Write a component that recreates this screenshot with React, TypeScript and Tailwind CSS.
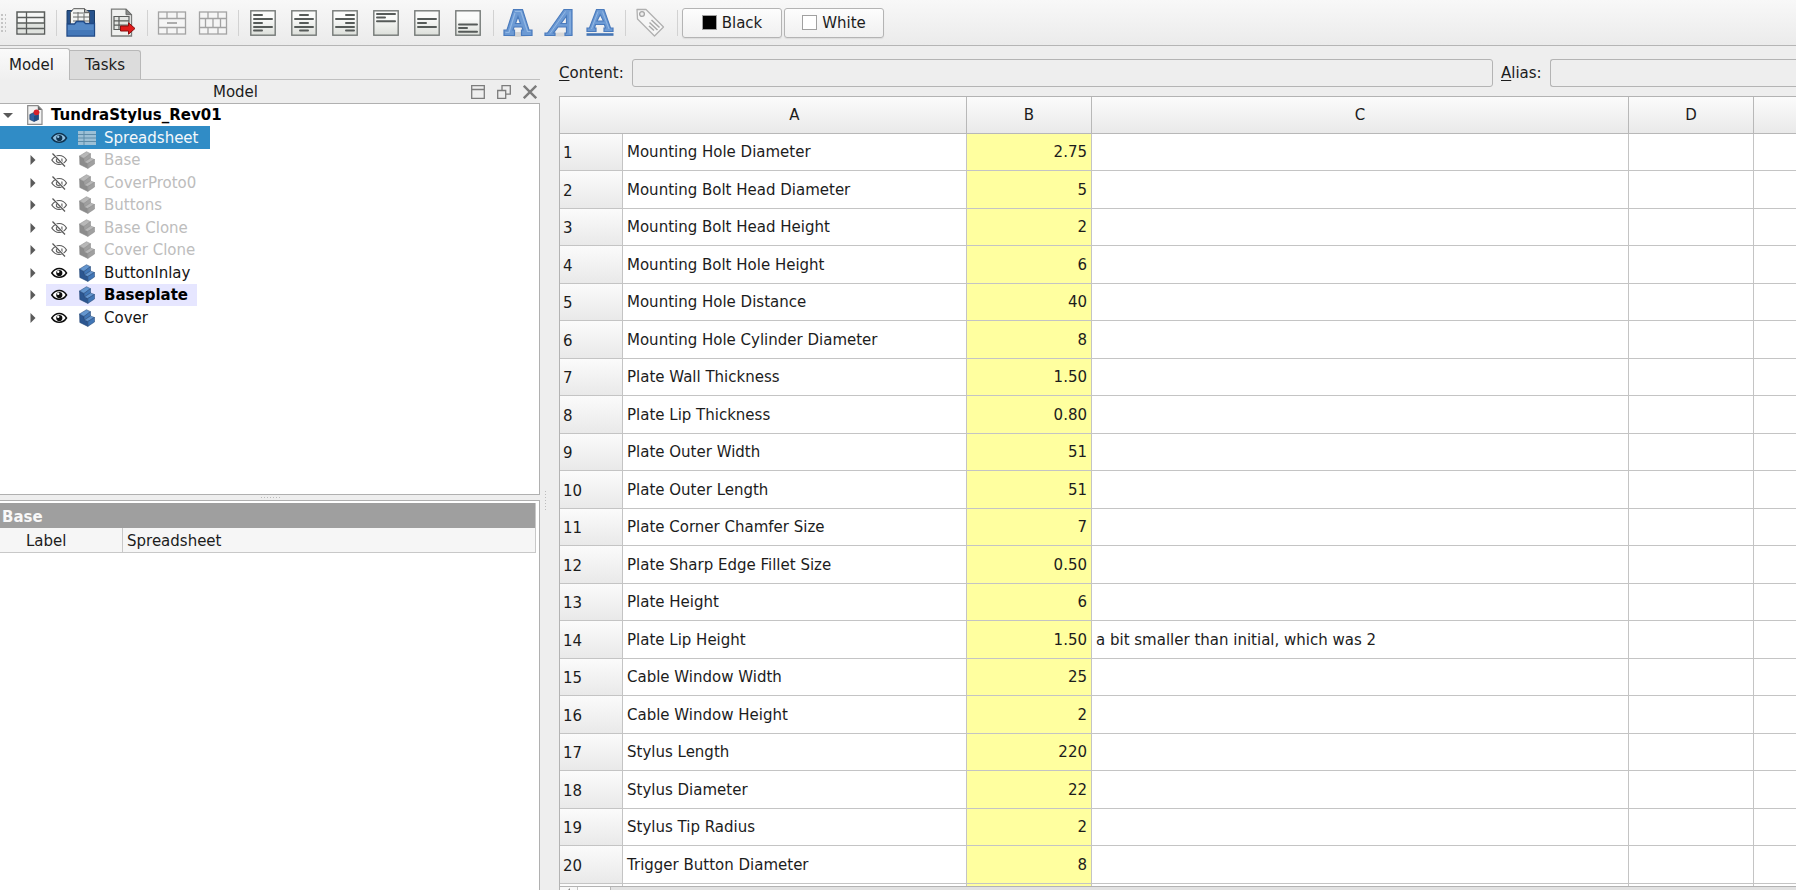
import type { ReactNode } from "react";

type Vis = "dim" | "normal" | "active";

const TREE: { name: string; kind: Vis }[] = [
  { name: "Base", kind: "dim" },
  { name: "CoverProto0", kind: "dim" },
  { name: "Buttons", kind: "dim" },
  { name: "Base Clone", kind: "dim" },
  { name: "Cover Clone", kind: "dim" },
  { name: "ButtonInlay", kind: "normal" },
  { name: "Baseplate", kind: "active" },
  { name: "Cover", kind: "normal" },
];

const ROWS: [string, string, string?][] = [
  ["Mounting Hole Diameter", "2.75"],
  ["Mounting Bolt Head Diameter", "5"],
  ["Mounting Bolt Head Height", "2"],
  ["Mounting Bolt Hole Height", "6"],
  ["Mounting Hole Distance", "40"],
  ["Mounting Hole Cylinder Diameter", "8"],
  ["Plate Wall Thickness", "1.50"],
  ["Plate Lip Thickness", "0.80"],
  ["Plate Outer Width", "51"],
  ["Plate Outer Length", "51"],
  ["Plate Corner Chamfer Size", "7"],
  ["Plate Sharp Edge Fillet Size", "0.50"],
  ["Plate Height", "6"],
  ["Plate Lip Height", "1.50", "a bit smaller than initial, which was 2"],
  ["Cable Window Width", "25"],
  ["Cable Window Height", "2"],
  ["Stylus Length", "220"],
  ["Stylus Diameter", "22"],
  ["Stylus Tip Radius", "2"],
  ["Trigger Button Diameter", "8"],
];

/* ---------- toolbar icons ---------- */

function SheetIcon() {
  return (
    <svg width="30" height="30" viewBox="0 0 30 30" aria-hidden="true">
      <rect x="1" y="4" width="27.5" height="22" fill="#f6f7f6" stroke="#5a5d5b" strokeWidth="1.5" />
      <rect x="1.8" y="15" width="26" height="10.2" fill="#dfe2de" />
      <path d="M1 9.5h27.5M1 15h27.500M1 20.5h27.500M10.500 4v22" stroke="#5a5d5b" strokeWidth="1.3" fill="none" />
    </svg>
  );
}

function ImportIcon() {
  return (
    <svg width="30" height="30" viewBox="0 0 30 30" aria-hidden="true">
      <path d="M1 2.500h27.500v13H1z" fill="#27528c" stroke="#1b3c66" />
      <path d="M7.500 0.700h11l5 4v12h-19V4.500z" fill="#f4f5f3" stroke="#555" />
      <path d="M18.500 0.700v4h5" fill="#b0b2b0" stroke="#555" />
      <path d="M7 5h12M7 9h16M7 13h16M12 4v11M18 6v9" fill="none" stroke="#6a6c6a" />
      <path d="M1 16h7.500l2-2.500h7l2 2h9v12.500H1z" fill="#5488c6" stroke="#204a87" strokeWidth="1.300" />
      <path d="M2 22h26v5.300H2z" fill="#4377b8" />
    </svg>
  );
}

function ExportIcon() {
  return (
    <svg width="30" height="30" viewBox="0 0 30 30" aria-hidden="true">
      <path d="M4.500 1.200h14.500l5.500 5.500v21.300h-20z" fill="#f0f1ef" stroke="#7a7c7a" strokeWidth="1.300" />
      <path d="M19 1.200v5.500h5.500z" fill="#8a8c8a" stroke="#6a6c6a" />
      <path d="M7 8.500h15v13H7z" fill="#e4e6e3" stroke="#5a5d5b" strokeWidth="1.200" />
      <path d="M7 12.800h15M7 17.100h15M12 8.500v13" stroke="#5a5d5b" strokeWidth="1.200" fill="none" />
      <path d="M13.500 18h8v-3.200l6.500 5.700-6.500 5.700V23h-8z" fill="#e01b1b" stroke="#8c0e0e" />
    </svg>
  );
}

function MergeIcon({ split = false }: { split?: boolean }) {
  return (
    <svg width="30" height="30" viewBox="0 0 30 30" aria-hidden="true">
      <rect x="1.500" y="4" width="27" height="22" fill="#f5f5f5" stroke="#a3a3a3" strokeWidth="1.300" />
      <path d="M1.500 10.500h27M1.500 19.500h27M10 4v6.500M20 4v6.500M10 19.500V26M20 19.500V26" stroke="#a3a3a3" strokeWidth="1.300" fill="none" />
      {split ? (
        <path d="M7.500 10.500v9M15 10.500v9M22.500 10.500v9" stroke="#a3a3a3" strokeWidth="1.300" />
      ) : (
        <path d="M10 15h10" stroke="#adadad" strokeWidth="2" />
      )}
    </svg>
  );
}

function AlignIcon({ lines }: { lines: [number, number, number][] }) {
  return (
    <svg width="30" height="30" viewBox="0 0 30 30" aria-hidden="true">
      <defs>
        <linearGradient id="alignFill" x1="0" y1="0" x2="0" y2="1">
          <stop offset="0.3" stopColor="#fafbfa" />
          <stop offset="1" stopColor="#dcdfda" />
        </linearGradient>
      </defs>
      <rect x="2.800" y="2.800" width="24.400" height="24.400" fill="url(#alignFill)" stroke="#747977" strokeWidth="1.400" />
      {lines.map(([x, y, w]) => (
        <path key={y} d={`M${x} ${y}h${w}`} stroke="#565b59" strokeWidth="2" strokeLinecap="round" />
      ))}
    </svg>
  );
}

const LEFT: [number, number, number][] = [[6, 7, 8], [6, 11, 18], [6, 15, 8], [6, 19, 18], [6, 22.5, 8]];
const CENTER: [number, number, number][] = [[11, 7, 8], [6, 11, 18], [11, 15, 8], [6, 19, 18], [11, 22.5, 8]];
const RIGHT: [number, number, number][] = [[16, 7, 8], [6, 11, 18], [16, 15, 8], [6, 19, 18], [16, 22.5, 8]];
const TOP: [number, number, number][] = [[6, 6, 18], [6, 9.5, 8], [6, 13.3, 18]];
const MIDDLE: [number, number, number][] = [[6, 11, 18], [6, 15, 8], [6, 19, 18]];
const BOTTOM: [number, number, number][] = [[6, 16.5, 18], [6, 20, 8], [6, 23.8, 18]];

function BoldIcon() {
  return (
    <svg width="30" height="30" viewBox="0 0 30 30" aria-hidden="true">
      <ellipse cx="15" cy="26.500" rx="13" ry="2.500" fill="#d4d4d4" />
      <path
        d="M10.500 1.500h9l6.500 20.500h3v5.500H18.500V22h1.500l-1-3h-8l-1 3h1.500v5.500H1V22h3zM15 8.500l-2.500 7h5z"
        fill="#6c9ad4" stroke="#4a7bbd" strokeWidth="1.200" fillRule="evenodd"
      />
      <path d="M12 3.500h6l6.500 20h3M2.500 24.500h3.500L12 5" fill="none" stroke="#93b8e4" strokeWidth="1.200" />
    </svg>
  );
}

function ItalicIcon() {
  return (
    <svg width="30" height="30" viewBox="0 0 30 30" aria-hidden="true">
      <ellipse cx="17" cy="26.500" rx="12" ry="2" fill="#d8d8d8" />
      <path
        d="M20 1.500h8v26h-7V25h1.500v-6h-8.500L9.500 25H11v2.500H1V25h2.500zM22.500 8L17 15.500h5.500z"
        fill="#6c9ad4" stroke="#4a7bbd" strokeWidth="1.200" fillRule="evenodd"
      />
      <path d="M21.500 3.500L6 25.500M26 3.500v22" fill="none" stroke="#93b8e4" />
    </svg>
  );
}

function UnderlineIcon() {
  return (
    <svg width="30" height="30" viewBox="0 0 30 30" aria-hidden="true">
      <path
        d="M11.500 1.500h7.500l6.500 18.500H28v3.500h-9V20h1.500l-1-3.500h-9L9.500 20H11v3.500H2V20h2.500zM15.200 6.500L12 13h6.500z"
        fill="#6c9ad4" stroke="#4a7bbd" strokeWidth="1.200" fillRule="evenodd"
      />
      <path d="M13 3.500L6.500 21M17.500 3.500L24 21" fill="none" stroke="#93b8e4" />
      <path d="M1.500 26.500h27" stroke="#4374b4" strokeWidth="2.600" />
    </svg>
  );
}

function TagIcon() {
  return (
    <svg width="30" height="30" viewBox="0 0 30 30" aria-hidden="true">
      <path d="M2 1.500h9L28.500 19 19.500 28 2.500 11z" fill="#f6f6f6" stroke="#b0b0b0" strokeWidth="1.300" strokeLinejoin="round" />
      <circle cx="7" cy="6" r="2.400" fill="#eee" stroke="#a6a6a6" strokeWidth="1.300" />
      <path d="M16.500 12l8 7.500M14.500 14.500l8 7.500M14 18l5 4.500" stroke="#a9a9a9" strokeWidth="1.500" />
    </svg>
  );
}

/* ---------- tree icons ---------- */

function EyeOpen({ color = "#0c0c0c", pupil = "#fff" }: { color?: string; pupil?: string }) {
  return (
    <svg width="18" height="12" viewBox="0 0 18 12" aria-hidden="true">
      <path d="M1.800 6C4 2.600 6.500 1.500 9.200 1.500S14.500 2.600 16.500 6C14.500 9.200 11.900 10.300 9.200 10.300S4 9.200 1.800 6z" fill={pupil} stroke={color} strokeWidth="1.500" />
      <circle cx="9.300" cy="6" r="3.100" fill={color} />
      <circle cx="8.200" cy="4.800" r="1.200" fill={pupil} />
    </svg>
  );
}

function EyeClosed() {
  return (
    <svg width="18" height="16" viewBox="0 0 18 16" aria-hidden="true">
      <path d="M1.800 8C4 4.600 6.500 3.500 9.200 3.500S14.500 4.600 16.500 8C14.500 11.400 11.900 12.500 9.200 12.500S4 11.400 1.800 8z" fill="none" stroke="#5a5a5a" strokeWidth="1.200" />
      <path d="M6.500 6.500v3q2.700 2.500 5.400 0V6.500" fill="none" stroke="#666" strokeWidth="1.200" />
      <path d="M3.500 2l11.500 12.500" stroke="#fff" strokeWidth="2.200" />
      <path d="M2.500 1.500l12.500 13" stroke="#555" strokeWidth="1.200" />
    </svg>
  );
}

function BodyIcon({ dim }: { dim: boolean }) {
  const c = dim
    ? { top: "#b8b8b8", left: "#8c8c8c", right: "#a0a0a0", line: "#868686" }
    : { top: "#6496cf", left: "#2c5690", right: "#4176b6", line: "#1f4170" };
  return (
    <svg width="16" height="18" viewBox="0 0 16 18" aria-hidden="true">
      <g stroke={c.line} strokeWidth="0.500" strokeLinejoin="round">
        <path d="M0.500 5L5 7.500l0.500 3.500 3.300 1.500v4.900L0.800 13.500z" fill={c.left} />
        <path d="M0.500 5L7.500 0.700l4 2L5 7.500z" fill={c.top} />
        <path d="M5 7.500l6.500-4.800V7L5.500 11z" fill={c.right} />
        <path d="M5.500 11l6-4 4 1.500-6.700 4z" fill={c.top} />
        <path d="M8.800 12.500l6.700-4v4.500l-6.700 4.400z" fill={c.right} />
      </g>
    </svg>
  );
}

function DocIcon() {
  return (
    <svg width="16" height="20" viewBox="0 0 16 20" aria-hidden="true">
      <path d="M0.700 0.700h10.300l4 4v14.600H0.700z" fill="#f2f2f2" stroke="#8b8b8b" strokeWidth="1.200" />
      <path d="M10.800 0.700v4.300H15z" fill="#666" />
      <path d="M2.800 9.500L7 7.500l4.500 2v5L7 16.500l-4.200-2z" fill="#2f5f9f" stroke="#173459" strokeWidth="0.600" />
      <path d="M7 11l4.500-1.500v5L7 16.500z" fill="#214a80" />
      <circle cx="9.500" cy="7.300" r="2.900" fill="#d5202a" />
    </svg>
  );
}

function TreeSheetIcon() {
  return (
    <svg width="18" height="14" viewBox="0 0 18 14" aria-hidden="true">
      <rect width="18" height="14" fill="#9cc0d6" />
      <path d="M0 3.500h18M0 7h18M0 10.500h18M6 0v14" stroke="#5f8ca8" strokeWidth="1" />
    </svg>
  );
}

/* ---------- pieces ---------- */

function ToolButton({ label, children }: { label: string; children: ReactNode }) {
  return (
    <button type="button" aria-label={label} className="flex size-[30px] shrink-0 items-center justify-center">
      {children}
    </button>
  );
}

function Separator() {
  return <div className="mr-[9px] ml-[10px] h-[26px] w-px shrink-0 bg-[#d2d2d2]" />;
}

function ColorButton({ swatch, children }: { swatch: string; children: ReactNode }) {
  return (
    <button
      type="button"
      className="flex h-[30px] w-[100px] items-center justify-center gap-[5px] rounded-[3px] border border-[#b4b4b4] bg-gradient-to-b from-[#fdfdfd] to-[#f0f0f0] shadow-[0_1px_1px_#dcdcdc]"
    >
      <span className={`size-[15px] border border-[#a0a0a0] ${swatch}`} />
      {children}
    </button>
  );
}

function ToolGroup({ children }: { children: ReactNode }) {
  return <div className="flex gap-[11px]">{children}</div>;
}

function Toolbar() {
  return (
    <div
      role="toolbar"
      className="flex h-[46px] shrink-0 items-center border-b border-[#b5b5b5] bg-gradient-to-b from-[#f8f8f8] to-[#ebebeb]"
    >
      <div className="mr-[10px] h-5 w-[6px] bg-[radial-gradient(#c4c4c4_1px,transparent_1px)] bg-size-[4px_4px]" />
      <ToolButton label="Create spreadsheet"><SheetIcon /></ToolButton>
      <Separator />
      <ToolGroup>
        <ToolButton label="Import spreadsheet"><ImportIcon /></ToolButton>
        <ToolButton label="Export spreadsheet"><ExportIcon /></ToolButton>
      </ToolGroup>
      <Separator />
      <ToolGroup>
        <ToolButton label="Merge cells"><MergeIcon /></ToolButton>
        <ToolButton label="Split cell"><MergeIcon split /></ToolButton>
      </ToolGroup>
      <Separator />
      <ToolGroup>
        <ToolButton label="Align left"><AlignIcon lines={LEFT} /></ToolButton>
        <ToolButton label="Align center"><AlignIcon lines={CENTER} /></ToolButton>
        <ToolButton label="Align right"><AlignIcon lines={RIGHT} /></ToolButton>
        <ToolButton label="Align top"><AlignIcon lines={TOP} /></ToolButton>
        <ToolButton label="Align middle"><AlignIcon lines={MIDDLE} /></ToolButton>
        <ToolButton label="Align bottom"><AlignIcon lines={BOTTOM} /></ToolButton>
      </ToolGroup>
      <Separator />
      <ToolGroup>
        <ToolButton label="Bold"><BoldIcon /></ToolButton>
        <ToolButton label="Italic"><ItalicIcon /></ToolButton>
        <ToolButton label="Underline"><UnderlineIcon /></ToolButton>
      </ToolGroup>
      <Separator />
      <ToolButton label="Set alias"><TagIcon /></ToolButton>
      <div className="mr-1 ml-3 h-[26px] w-px shrink-0 bg-[#d2d2d2]" />
      <div className="flex gap-0.5">
        <ColorButton swatch="bg-black">Black</ColorButton>
        <ColorButton swatch="bg-white">White</ColorButton>
      </div>
    </div>
  );
}

function Expander({ name }: { name: string }) {
  return (
    <button type="button" aria-label={`Expand ${name}`} className="ml-[29px] flex h-4 w-[17px] items-center">
      <svg width="7" height="10" viewBox="0 0 7 10" aria-hidden="true">
        <path d="M1.500 0l5 5-5 5z" fill="#5a5a5a" />
      </svg>
    </button>
  );
}

const NAME_STYLE: Record<Vis, string> = {
  dim: "text-[#bdbdbd]",
  normal: "text-[#141414]",
  active: "font-bold text-black",
};

function ModelTree() {
  return (
    <ul
      role="tree"
      className="h-[392px] shrink-0 overflow-hidden border-y border-r border-[#b0b0b0] bg-white [&>li]:flex [&>li]:items-center [&>li:nth-child(even)]:h-[23px] [&>li:nth-child(odd)]:h-[22px]"
    >
      <li role="treeitem" className="font-bold text-black">
        <button type="button" aria-label="Collapse TundraStylus_Rev01" className="ml-[3px] flex w-6 items-center">
          <svg width="10" height="7" viewBox="0 0 10 7" aria-hidden="true">
            <path d="M0 1h10L5 6z" fill="#5a5a5a" />
          </svg>
        </button>
        <DocIcon />
        <span className="ml-2">TundraStylus_Rev01</span>
      </li>
      <li role="treeitem" aria-selected="true" className="w-[210px] bg-[#308cc6] pl-[50px] text-[#f4f8fb]">
        <EyeOpen color="#0f3350" pupil="#8fbfe0" />
        <span className="ml-[10px] flex"><TreeSheetIcon /></span>
        <span className="ml-2">Spreadsheet</span>
      </li>
      {TREE.map(({ name, kind }) => (
        <li key={name} role="treeitem">
          <Expander name={name} />
          <div
            className={`flex h-full items-center pr-[9px] pl-1 ${kind === "active" ? "bg-[#e6e6ff]" : ""} ${NAME_STYLE[kind]}`}
          >
            <span className="flex w-[29px] items-center">{kind === "dim" ? <EyeClosed /> : <EyeOpen />}</span>
            <BodyIcon dim={kind === "dim"} />
            <span className="ml-[9px]">{name}</span>
          </div>
        </li>
      ))}
    </ul>
  );
}

function Sidebar() {
  return (
    <aside className="flex w-[540px] shrink-0 flex-col">
      <div role="tablist" className="flex h-[34px] shrink-0 items-end border-b border-[#c0c0c0]">
        <button
          type="button"
          role="tab"
          aria-selected="true"
          className="-mb-px h-[32px] w-[70px] rounded-tr-[3px] border-t border-r border-[#b8b8b8] bg-gradient-to-b from-[#fafafa] to-[#efefef] pr-[6px]"
        >
          Model
        </button>
        <button
          type="button"
          role="tab"
          aria-selected="false"
          className="h-[29px] w-[71px] rounded-tr-[3px] border-t border-r border-[#b8b8b8] bg-[#dcdcdc]"
        >
          Tasks
        </button>
      </div>
      <div className="flex h-[23px] shrink-0 items-center pr-[3px]">
        <span className="flex-1 text-center">Model</span>
        <div className="flex gap-3 text-[#7c7c7c]">
          <button type="button" aria-label="Shade panel">
            <svg width="14" height="14" viewBox="0 0 14 14" fill="none" stroke="currentColor" strokeWidth="1.300" aria-hidden="true">
              <path d="M0.700 0.700h12.600v12.600H0.700zM0.700 4.500h12.600" />
            </svg>
          </button>
          <button type="button" aria-label="Float panel">
            <svg width="14" height="14" viewBox="0 0 14 14" fill="none" stroke="currentColor" strokeWidth="1.300" aria-hidden="true">
              <path d="M0.700 5.500h8v8h-8zM5 5.500V0.700h8.300v8.500H9" />
            </svg>
          </button>
          <button type="button" aria-label="Close panel">
            <svg width="14" height="14" viewBox="0 0 14 14" fill="none" stroke="currentColor" strokeWidth="2.400" aria-hidden="true">
              <path d="M0.800 0.800l12.400 12.400M13.200 0.800L0.800 13.200" />
            </svg>
          </button>
        </div>
      </div>
      <ModelTree />
      <div className="flex h-[5px] shrink-0 items-center justify-center">
        <div className="h-1 w-5 bg-[radial-gradient(#bcbcbc_1px,transparent_1px)] bg-size-[3px_3px]" />
      </div>
      <div className="flex-1 border-t border-r border-[#b0b0b0] bg-white pt-0.5 pr-[3px]">
        <table className="w-full border-separate border-spacing-0 border-r border-[#c8c8c8] text-left">
          <thead>
            <tr className="h-[25px] bg-[#9f9f9f] text-[#f8f8f8]">
              <th colSpan={2} className="pt-0.5 pl-0.5 font-bold">Base</th>
            </tr>
          </thead>
          <tbody>
            <tr className="h-[25px] bg-[#f6f6f6]">
              <th scope="row" className="w-[123px] border-r border-b border-[#c8c8c8] pt-0.5 pl-[26px] font-normal">Label</th>
              <td className="border-b border-[#c8c8c8] pt-0.5 pl-1">Spreadsheet</td>
            </tr>
          </tbody>
        </table>
      </div>
    </aside>
  );
}

function SheetTable() {
  return (
    <table className="w-full table-fixed border-separate border-spacing-0 border-t border-l border-[#b3b3b3] bg-white">
      <colgroup>
        <col className="w-[63px]" />
        <col className="w-[344px]" />
        <col className="w-[125px]" />
        <col className="w-[537px]" />
        <col className="w-[125px]" />
        <col />
      </colgroup>
      <thead>
        <tr className="h-[37px] bg-gradient-to-b from-[#fbfbfb] to-[#e9e9e9] [&>*]:border-b [&>*]:border-[#b8b8b8] [&>*]:font-normal">
          <td />
          <th className="border-r">A</th>
          <th className="border-r">B</th>
          <th className="border-r">C</th>
          <th className="border-r">D</th>
          <td />
        </tr>
      </thead>
      <tbody>
        {ROWS.map(([name, value, note], i) => (
          <tr key={name} className="odd:h-[37px] even:h-[38px] [&>*]:border-b [&>*]:border-[#c4c4c4]">
            <th
              scope="row"
              className="border-r bg-gradient-to-b from-[#fbfbfb] to-[#e9e9e9] pt-0.5 pl-[3px] text-left font-normal"
            >
              {i + 1}
            </th>
            <td className="border-r pl-1">{name}</td>
            <td className="border-r bg-[#ffff9f] pr-1 text-right">{value}</td>
            <td className="border-r pl-1">{note}</td>
            <td className="border-r" />
            <td />
          </tr>
        ))}
        <tr className="h-[2px]">
          <th className="border-r border-[#c4c4c4] bg-[#fbfbfb]" />
          <td className="border-r border-[#c4c4c4]" />
          <td className="border-r border-[#c4c4c4] bg-[#ffff9f]" />
          <td className="border-r border-[#c4c4c4]" />
          <td className="border-r border-[#c4c4c4]" />
          <td />
        </tr>
      </tbody>
    </table>
  );
}

function Sheet() {
  return (
    <main className="flex min-w-0 flex-1 flex-col overflow-hidden">
      <div className="flex h-[50px] shrink-0 items-center pt-1">
        <label htmlFor="content" className="w-[73px]">
          <span className="underline underline-offset-2">C</span>ontent:
        </label>
        <input id="content" className="h-7 min-w-0 flex-1 rounded-[3px] border border-[#b4b4b4] bg-[#eeeeee] px-1" />
        <label htmlFor="alias" className="ml-2 w-[49px]">
          <span className="underline underline-offset-2">A</span>lias:
        </label>
        <input
          id="alias"
          className="h-7 w-[246px] rounded-l-[3px] border border-r-0 border-[#b4b4b4] bg-[#eeeeee] px-1"
        />
      </div>
      <SheetTable />
      <div className="flex flex-1 border-t border-l border-[#b3b3b3] bg-[#e2e2e2]">
        <button type="button" aria-label="Scroll left" className="flex w-[18px] justify-center border-r border-[#c4c4c4] bg-[#f8f8f8]">
          <svg width="5" height="4" viewBox="0 0 5 4" aria-hidden="true">
            <path d="M4 1v3H1z" fill="#8a8a8a" />
          </svg>
        </button>
        <div className="w-[33px] border-r border-[#b8b8b8] bg-[#fdfdfd]" />
      </div>
    </main>
  );
}

export default function App() {
  return (
    <div className="flex h-screen flex-col overflow-hidden bg-[#eeeeee] font-['DejaVu_Sans',sans-serif] text-[15px] leading-[18px] text-[#1c1c1c]">
      <Toolbar />
      <div className="flex min-h-0 flex-1">
        <Sidebar />
        <div className="flex w-[19px] shrink-0 items-center pt-16 pl-1">
          <div className="h-5 w-[3px] bg-[radial-gradient(#bcbcbc_1px,transparent_1px)] bg-size-[3px_3px]" />
        </div>
        <Sheet />
      </div>
    </div>
  );
}
